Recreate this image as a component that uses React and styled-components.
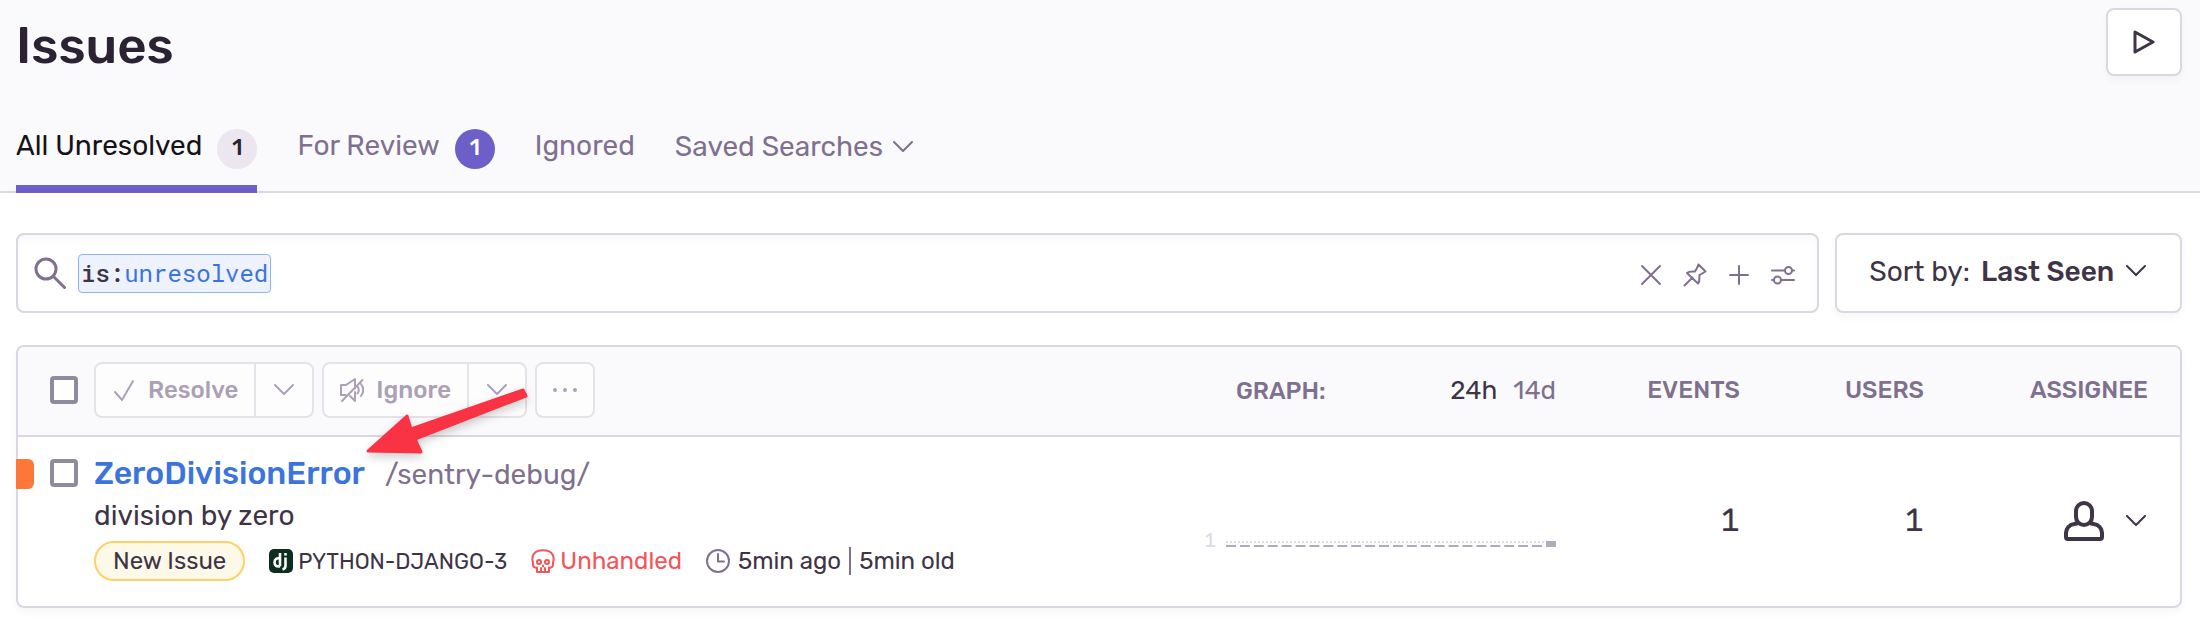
import { useState } from "react";
import styled, { createGlobalStyle } from "styled-components";

const GlobalStyle = createGlobalStyle`
  * {
    box-sizing: border-box;
  }
  body {
    margin: 0;
    background: #fff;
    color: #3e3446;
    font-family: Rubik, Roboto, "Liberation Sans", sans-serif;
    font-size: 28px;
  }
  button, input, select {
    font: inherit;
    color: inherit;
    margin: 0;
    padding: 0;
    border: none;
    background: none;
  }
  button {
    cursor: pointer;
  }
  a {
    color: inherit;
    text-decoration: none;
  }
  svg {
    display: block;
    flex: none;
  }
`

const Header = styled.header`
  padding: 8px 18px 0 16px;
  background: #fafafc;
  border-bottom: 2px solid #dbd6e1;
`
const TitleRow = styled.div`
  display: flex;
  justify-content: space-between;
  align-items: flex-start;
`
const PageTitle = styled.h1`
  margin: 0;
  font-size: 51px;
  font-weight: 500;
  line-height: 75px;
  color: #2b2233;
`
const PlayButton = styled.button`
  display: flex;
  align-items: center;
  justify-content: center;
  width: 76px;
  height: 68px;
  background: #fff;
  border: 2px solid #dbd6e1;
  border-radius: 8px;
  box-shadow: 0 4px 8px rgba(45, 35, 66, 0.04);
`
const Tabs = styled.nav`
  display: flex;
  gap: 40px;
  margin-top: 41px;
  margin-bottom: -2px;
`
const Tab = styled.a`
  display: flex;
  gap: 15px;
  height: 69px;
  line-height: 44px;
  color: ${props => props.$active ? '#161118' : '#80708f'};
  border-bottom: 8px solid ${props => props.$active ? '#6c5fc7' : 'transparent'};
`
const TabMenu = styled.button`
  display: flex;
  align-items: center;
  gap: 10px;
  height: 45px;
  color: #80708f;
`
const Badge = styled.span`
  width: 40px;
  height: 40px;
  margin-top: 5px;
  border-radius: 50%;
  background: ${props => props.$solid ? '#6c5fc7' : '#ebe6ef'};
  color: ${props => props.$solid ? '#fff' : '#2b2233'};
  font-size: 22px;
  font-weight: 500;
  line-height: 38px;
  text-align: center;
`

const Main = styled.main`
  padding: 40px 18px 14px 16px;
`
const FilterBar = styled.div`
  display: flex;
  gap: 16px;
  height: 80px;
`
const SearchBox = styled.form`
  flex: 1;
  display: flex;
  align-items: center;
  padding: 0 22px 0 16px;
  border: 2px solid #dbd6e1;
  border-radius: 8px;
  box-shadow: inset 0 4px 8px rgba(45, 35, 66, 0.03);
  color: #80708f;
`
const SearchToken = styled.span`
  margin-left: 12px;
  padding: 0 2px;
  border: 1px solid #8fb4f2;
  border-radius: 4px;
  background: #edf2fd;
  color: #3c74dd;
  font-family: "Roboto Mono", "Liberation Mono", monospace;
  font-size: 24px;
  line-height: 37px;
`
const TokenKey = styled.span`
  color: #3e3446;
  font-weight: 500;
`
const SearchInput = styled.input`
  flex: 1;
  min-width: 0;
  height: 40px;
  outline: none;
  color: #3e3446;
`
const SearchActions = styled.div`
  display: flex;
  gap: 20px;
  padding-top: 4px;
`
const SortBox = styled.label`
  display: flex;
  align-items: center;
  padding: 0 34px 4px 32px;
  border: 2px solid #dbd6e1;
  border-radius: 8px;
  box-shadow: 0 4px 8px rgba(45, 35, 66, 0.04);
`
const SortSelect = styled.select`
  appearance: none;
  margin: 0 11px;
  font-weight: 500;
  outline: none;
`

const Panel = styled.section`
  position: relative;
  margin-top: 32px;
  border: 2px solid #dbd6e1;
  border-radius: 8px;
  box-shadow: 0 4px 8px rgba(45, 35, 66, 0.04);
`
const Table = styled.table`
  width: 100%;
  table-layout: fixed;
  border-collapse: separate;
  border-spacing: 0;
`
const Column = styled.col`
  width: ${props => props.$width ? `${props.$width}px` : 'auto'};
`
const HeadCell = styled.th`
  height: 90px;
  padding: ${props => props.$last ? '0 32px 2px 0' : '0 0 2px'};
  background: #fafafc;
  border-bottom: 2px solid #dbd6e1;
  color: #80708f;
  font-size: 24px;
  font-weight: 500;
  text-align: ${props => props.$right ? 'right' : 'left'};
  &:first-child {
    border-top-left-radius: 6px;
  }
  &:last-child {
    border-top-right-radius: 6px;
  }
`
const CheckSlot = styled.div`
  padding-left: 32px;
`
const Checkbox = styled.input`
  appearance: none;
  display: block;
  width: 28px;
  height: 28px;
  background: #fff;
  border: 4px solid #8f8a9e;
  border-radius: 4px;
  &:checked {
    background: #6c5fc7;
  }
`
const Toolbar = styled.div`
  display: flex;
  gap: 8px;
`
const ButtonGroup = styled.div`
  display: flex;
  height: 56px;
  background: #fdfdfe;
  border: 2px solid #e5e2ea;
  border-radius: 8px;
  color: #aca0b6;
`
const ActionButton = styled.button`
  display: flex;
  align-items: center;
  justify-content: center;
  gap: 12px;
  padding: 0 16px;
  font-weight: 500;
`
const IconButton = styled.button`
  display: flex;
  align-items: center;
  justify-content: center;
  width: ${props => props.$divided ? 58 : 56}px;
  border-left: ${props => props.$divided ? '2px solid #e5e2ea' : 'none'};
`
const GraphHead = styled.div`
  display: flex;
  align-items: baseline;
  gap: 16px;
  padding-left: 32px;
`
const GraphLabel = styled.span`
  flex: 1;
`
const RangeButton = styled.button`
  font-size: 26px;
  font-weight: 400;
  color: ${props => props.$active ? '#3e3446' : '#80708f'};
`

const Cell = styled.td`
  padding: 0;
  vertical-align: top;
`
const Level = styled.div`
  display: flex;
  gap: 16px;
  margin: 22px 0 0 -2px;
`
const LevelMark = styled.span`
  width: 18px;
  height: 30px;
  background: #ff7738;
  border-radius: 0 6px 6px 0;
`
const Issue = styled.div`
  padding: 14px 0 25px;
`
const IssueTitle = styled.div`
  display: flex;
  align-items: baseline;
  gap: 20px;
  line-height: 44px;
  color: #80708f;
`
const IssueLink = styled.a`
  color: #3c74dd;
  font-size: 32px;
  font-weight: 500;
`
const IssueMessage = styled.div`
  line-height: 38px;
`
const Meta = styled.div`
  display: flex;
  align-items: center;
  gap: 24px;
  margin-top: 6px;
  font-size: 24px;
`
const NewTag = styled.span`
  padding: 0 17px;
  border: 2px solid #ffd066;
  border-radius: 20px;
  background: #fdf9e9;
  line-height: 36px;
`
const MetaItem = styled.span`
  display: flex;
  align-items: center;
  gap: ${props => props.$wide ? 8 : 5}px;
  color: ${props => props.$error ? '#f55459' : '#3e3446'};
`
const ProjectId = styled.a`
  font-size: 22px;
`
const Divider = styled.span`
  width: 2px;
  height: 28px;
  background: #80708f;
`
const GraphCell = styled(Cell)`
  padding-bottom: 54px;
  vertical-align: bottom;
`
const Graph = styled.div`
  display: flex;
  align-items: baseline;
  justify-content: space-between;
  line-height: 24px;
`
const AxisLabel = styled.span`
  color: #ddd9e6;
  font-size: 20px;
  font-variant-numeric: tabular-nums;
`
const CountCell = styled(Cell)`
  padding-bottom: 4px;
  font-size: 32px;
  font-variant-numeric: tabular-nums;
  text-align: right;
  vertical-align: middle;
`
const AssigneeCell = styled(Cell)`
  padding: 0 34px 2px 0;
  vertical-align: middle;
`
const AssigneeButton = styled.button`
  display: flex;
  align-items: center;
  gap: 22px;
  margin-left: auto;
`
// pointer laid over the toolbar and the first issue
const Pointer = styled.svg`
  position: absolute;
  top: 34px;
  left: 342px;
  pointer-events: none;
  filter: drop-shadow(0 4px 5px rgba(0, 0, 0, 0.2));
`

const Stroke = ({ size = 24, width = 2, children }) => (
  <svg width={size} height={size} viewBox={`0 0 ${size} ${size}`} fill="none" stroke="currentColor"
    strokeWidth={width} strokeLinecap="round" strokeLinejoin="round" aria-hidden="true">
    {children}
  </svg>
)
const Chevron = () => (
  <svg width="20" height="12" viewBox="0 0 20 12" fill="none" stroke="currentColor" strokeWidth="2"
    strokeLinecap="round" strokeLinejoin="round" aria-hidden="true">
    <path d="M1 1l9 9 9-9" />
  </svg>
)

const buckets = Array(23).fill(0).concat(1)

function Sparkline() {
  return (
    <svg width="330" height="48" viewBox="0 0 330 48" role="img" aria-label="Events in the last 24 hours">
      {buckets.map((count, i) => (
        <rect key={i} x={i * 13.91} y={count ? 42 : 46} width="10" height={count ? 6 : 2} fill="#b3a9bd" />
      ))}
      <path d="M0 43H319" stroke="#ddd9e6" strokeWidth="2" strokeDasharray="2 2" />
    </svg>
  )
}

export default function App() {
  const [query, setQuery] = useState('')
  const [range, setRange] = useState('24h')
  const [checked, setChecked] = useState(false)

  return (
    <>
      <GlobalStyle />
      <Header>
        <TitleRow>
          <PageTitle>Issues</PageTitle>
          <PlayButton aria-label="Enable real-time updates">
            <Stroke width={3}>
              <path d="M3 2v20l18-10z" />
            </Stroke>
          </PlayButton>
        </TitleRow>
        <Tabs>
          <Tab href="#unresolved" $active>All Unresolved<Badge>1</Badge></Tab>
          <Tab href="#review">For Review<Badge $solid>1</Badge></Tab>
          <Tab href="#ignored">Ignored</Tab>
          <TabMenu>Saved Searches<Chevron /></TabMenu>
        </Tabs>
      </Header>
      <Main>
        <FilterBar>
          <SearchBox onSubmit={e => e.preventDefault()}>
            <Stroke size={32} width={3}>
              <circle cx="12" cy="12" r="10" />
              <path d="M19.5 19.5L30.5 30.5" />
            </Stroke>
            <SearchToken><TokenKey>is:</TokenKey>unresolved</SearchToken>
            <SearchInput aria-label="Search issues" value={query} onChange={e => setQuery(e.target.value)} />
            <SearchActions>
              <button type="button" aria-label="Clear search">
                <Stroke><path d="M3 3l18 18M21 3L3 21" /></Stroke>
              </button>
              <button type="button" aria-label="Pin this search">
                <Stroke>
                  <path d="M1.500 22.500l8-8M15.500 1.500L22.500 8.500l-2.500 1.500-3.500 2c-.5 2.500.8 6-1.500 8.500L4 10c2-2 4.500-1.500 8-1.500l2-3.500z" />
                </Stroke>
              </button>
              <button type="button" aria-label="Create saved search">
                <Stroke><path d="M12 3v18M3 12h18" /></Stroke>
              </button>
              <button type="button" aria-label="Search builder">
                <Stroke>
                  <path d="M1 7.500h13M21 7.500h2M1 17h2M10 17h13" />
                  <circle cx="17.500" cy="7.500" r="3.500" />
                  <circle cx="6.500" cy="17" r="3.500" />
                </Stroke>
              </button>
            </SearchActions>
          </SearchBox>
          <SortBox>
            Sort by:
            <SortSelect defaultValue="date">
              <option value="date">Last Seen</option>
            </SortSelect>
            <Chevron />
          </SortBox>
        </FilterBar>

        <Panel>
          <Table>
            <colgroup>
              <Column $width={76} />
              <Column />
              <Column $width={352} />
              <Column $width={184} />
              <Column $width={184} />
              <Column $width={256} />
            </colgroup>
            <thead>
              <tr>
                <HeadCell>
                  <CheckSlot>
                    <Checkbox type="checkbox" aria-label="Select all" checked={checked} onChange={e => setChecked(e.target.checked)} />
                  </CheckSlot>
                </HeadCell>
                <HeadCell>
                  <Toolbar>
                    <ButtonGroup>
                      <ActionButton>
                        <Stroke><path d="M3 14l7 8L21 3" /></Stroke>
                        Resolve
                      </ActionButton>
                      <IconButton $divided aria-label="More resolve options"><Chevron /></IconButton>
                    </ButtonGroup>
                    <ButtonGroup>
                      <ActionButton>
                        <Stroke>
                          <path d="M15 14v9l-5-5M5.500 17H1V7h5L15 1v9.500M2 23L22.500 2M17.500 8.500c1.500 2 1.500 5 0 7M21 6c3 4 3 8 0 12" />
                        </Stroke>
                        Ignore
                      </ActionButton>
                      <IconButton $divided aria-label="More ignore options"><Chevron /></IconButton>
                    </ButtonGroup>
                    <ButtonGroup>
                      <IconButton aria-label="More issue actions">
                        <svg width="26" height="6" viewBox="0 0 26 6" fill="currentColor" aria-hidden="true">
                          <circle cx="3" cy="3" r="2" />
                          <circle cx="13" cy="3" r="2" />
                          <circle cx="23" cy="3" r="2" />
                        </svg>
                      </IconButton>
                    </ButtonGroup>
                  </Toolbar>
                </HeadCell>
                <HeadCell>
                  <GraphHead>
                    <GraphLabel>GRAPH:</GraphLabel>
                    {['24h', '14d'].map(item => (
                      <RangeButton key={item} $active={range === item} onClick={() => setRange(item)}>{item}</RangeButton>
                    ))}
                  </GraphHead>
                </HeadCell>
                <HeadCell $right>EVENTS</HeadCell>
                <HeadCell $right>USERS</HeadCell>
                <HeadCell $right $last>ASSIGNEE</HeadCell>
              </tr>
            </thead>
            <tbody>
              <tr>
                <Cell>
                  <Level>
                    <LevelMark />
                    <Checkbox type="checkbox" aria-label="Select issue" checked={checked} onChange={e => setChecked(e.target.checked)} />
                  </Level>
                </Cell>
                <Cell>
                  <Issue>
                    <IssueTitle>
                      <IssueLink href="#issue">ZeroDivisionError</IssueLink>
                      /sentry-debug/
                    </IssueTitle>
                    <IssueMessage>division by zero</IssueMessage>
                    <Meta>
                      <NewTag>New Issue</NewTag>
                      <MetaItem>
                        <svg width="24" height="24" viewBox="0 0 24 24" aria-hidden="true">
                          <rect width="24" height="24" rx="5" fill="#0b2e20" />
                          <path d="M11 4v13.200M11 9.500c-3-1-5.500.5-5.500 4 0 3.200 2.300 4.400 5.500 3.700M16.500 8.500v8c0 2.500-1 3.500-3 4" fill="none" stroke="#fff" strokeWidth="2.600" />
                          <rect x="15.200" y="4" width="2.600" height="2.600" fill="#fff" />
                        </svg>
                        <ProjectId href="#project">PYTHON-DJANGO-3</ProjectId>
                      </MetaItem>
                      <MetaItem $error>
                        <Stroke>
                          <path d="M6 23v-4.500c-2 .5-4-.5-4-2.500v-2.500C0 7 3 1.200 12 1.200s12 5.800 10 12.300V16c0 2-2 3-4 2.500V23z" />
                          <circle cx="8" cy="13" r="2" />
                          <circle cx="16" cy="13" r="2" />
                          <path d="M10 19v4M14 19v4M12 16.500v1" />
                        </Stroke>
                        Unhandled
                      </MetaItem>
                      <MetaItem $wide>
                        <Stroke>
                          <circle cx="12" cy="12" r="11" stroke="#80708f" />
                          <path d="M12 5v7.500h6" stroke="#80708f" />
                        </Stroke>
                        5min ago
                        <Divider />
                        5min old
                      </MetaItem>
                    </Meta>
                  </Issue>
                </Cell>
                <GraphCell>
                  <Graph>
                    <AxisLabel>1</AxisLabel>
                    <Sparkline />
                  </Graph>
                </GraphCell>
                <CountCell>1</CountCell>
                <CountCell>1</CountCell>
                <AssigneeCell>
                  <AssigneeButton aria-label="Assign issue">
                    <Stroke size={40} width={4}>
                      <path d="M20 2a8 8 0 0 1 8 8v6a8 8 0 0 1-16 0v-6a8 8 0 0 1 8-8z" />
                      <path d="M13 22.500l-3 .5a9 9 0 0 0-8 9v4a2 2 0 0 0 2 2h32a2 2 0 0 0 2-2v-4a9 9 0 0 0-8-9l-3-.5" />
                    </Stroke>
                    <Chevron />
                  </AssigneeButton>
                </AssigneeCell>
              </tr>
            </tbody>
          </Table>
          <Pointer width="180" height="80" viewBox="0 0 180 80" aria-hidden="true">
            <path d="M8 70L47 35L51 48L163 9L166 15L55 58L61 71Z" fill="#fa3344" stroke="#fa3344" strokeWidth="3" strokeLinejoin="round" />
          </Pointer>
        </Panel>
      </Main>
    </>
  )
}
